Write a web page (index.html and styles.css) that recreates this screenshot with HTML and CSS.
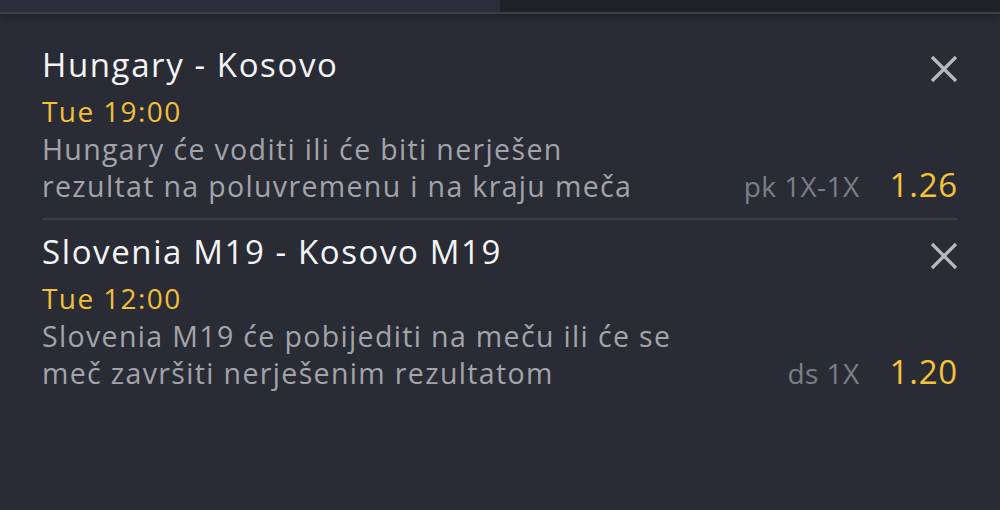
FILE: index.html
```html
<!DOCTYPE html>
<html lang="hr">
<head>
<meta charset="utf-8">
<title>Listić</title>
<link rel="stylesheet" href="styles.css">
</head>
<body>
<div class="tabs">
  <div class="tab tab-active"></div>
  <div class="tab"></div>
</div>
<ul class="slip">
  <li class="bet">
    <div class="bet-head">
      <div class="match">Hungary - Kosovo</div>
      <button class="remove" aria-label="Ukloni">
        <svg viewBox="0 0 28 28" width="28" height="28"><path d="M2 2L26 26M26 2L2 26" stroke="currentColor" stroke-width="3.2" fill="none"/></svg>
      </button>
    </div>
    <div class="time">Tue 19:00</div>
    <div class="bet-body">
      <div class="desc">Hungary će voditi ili će biti nerješen<br>rezultat na poluvremenu i na kraju meča</div>
      <div class="pick"><span class="market">pk 1X-1X</span><span class="odd">1.26</span></div>
    </div>
  </li>
  <li class="bet">
    <div class="bet-head">
      <div class="match">Slovenia M19 - Kosovo M19</div>
      <button class="remove" aria-label="Ukloni">
        <svg viewBox="0 0 28 28" width="28" height="28"><path d="M2 2L26 26M26 2L2 26" stroke="currentColor" stroke-width="3.2" fill="none"/></svg>
      </button>
    </div>
    <div class="time">Tue 12:00</div>
    <div class="bet-body">
      <div class="desc">Slovenia M19 će pobijediti na meču ili će se<br>meč završiti nerješenim rezultatom</div>
      <div class="pick"><span class="market">ds 1X</span><span class="odd">1.20</span></div>
    </div>
  </li>
</ul>
</body>
</html>
```
FILE: styles.css
```css
* { box-sizing: border-box; }
html, body { margin: 0; padding: 0; }
body {
  width: 1000px;
  height: 510px;
  overflow: hidden;
  background: #292c35;
  font-family: "Open Sans", "Liberation Sans", sans-serif;
  color: #f2f2f3;
}
.tabs {
  display: flex;
  height: 14px;
  border-bottom: 2px solid #3d4049;
  box-shadow: 0 2px 10px rgba(0,0,0,0.35);
  position: relative;
}
.tab { flex: 1; background: #1f2129; }
.tab-active { background: #2b2e3a; }
.slip {
  list-style: none;
  margin: 0;
  padding: 0 42px;
}
.bet {
  padding-top: 30px;
  padding-bottom: 13px;
}
.bet + .bet {
  border-top: 2px solid #3b3e47;
  padding-top: 11px;
}
.bet-head {
  display: flex;
  justify-content: space-between;
  align-items: center;
}
.match {
  font-size: 33px;
  line-height: 42px;
  letter-spacing: 1.6px;
  color: #f4f4f5;
}
.remove {
  background: none;
  border: 0;
  padding: 0;
  margin-top: 8px;
  color: #b9babe;
  width: 28px;
  height: 28px;
  display: flex;
}
.time {
  font-size: 28px;
  line-height: 40px;
  letter-spacing: 1.4px;
  color: #f3be39;
  margin-top: 5px;
}
.bet-body {
  display: flex;
  justify-content: space-between;
  align-items: flex-end;
}
.desc {
  font-size: 28.5px;
  line-height: 37px;
  letter-spacing: 1.35px;
  color: #a2a4aa;
}
.pick {
  display: flex;
  align-items: baseline;
  gap: 30px;
}
.market {
  font-size: 28px;
  line-height: 37px;
  letter-spacing: 0.4px;
  color: #7c7e85;
}
.odd {
  font-size: 33px;
  line-height: 37px;
  letter-spacing: 0.8px;
  color: #f5c239;
}
```
